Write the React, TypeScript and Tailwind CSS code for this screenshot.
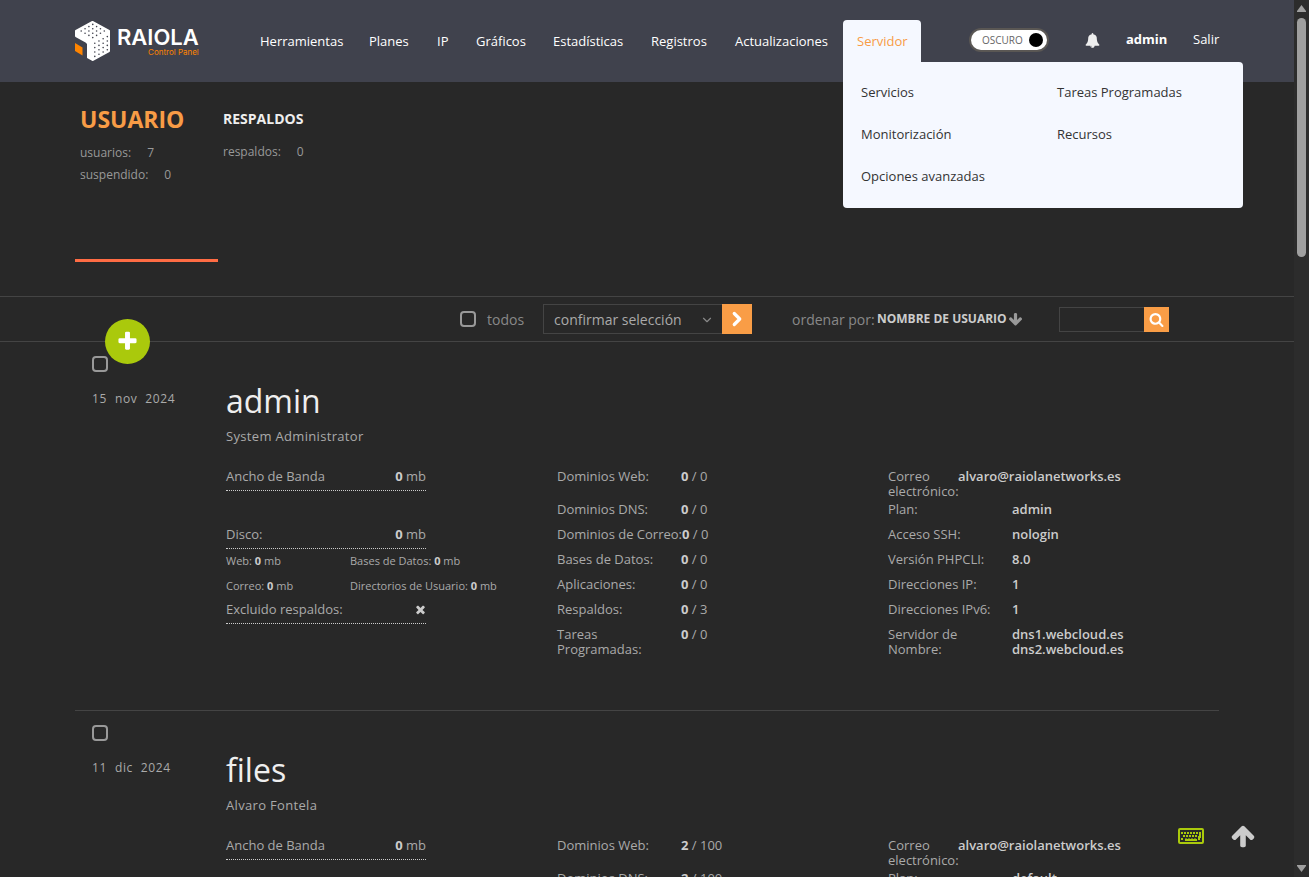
import { ChevronDown, ChevronRight } from "lucide-react"

type Account = {
  id: string
  date: string[]
  owner: string
  bandwidth: string
  disk: string
  limits: { label: string; used: string; max: string }[]
  email: string
  info: { label: string; value: string[] }[]
}

const navItems = [
  { label: "Herramientas", width: "w-[109px]" },
  { label: "Planes", width: "w-[68px]" },
  { label: "IP", width: "w-[39px]" },
  { label: "Gráficos", width: "w-[77px]" },
  { label: "Estadísticas", width: "w-[98px]" },
  { label: "Registros", width: "w-[84px]" },
  { label: "Actualizaciones", width: "w-[122px]" },
]

const serverMenu = ["Servicios", "Tareas Programadas", "Monitorización", "Recursos", "Opciones avanzadas"]

const accounts: Account[] = [
  {
    id: "admin",
    date: ["15", "nov", "2024"],
    owner: "System Administrator",
    bandwidth: "0",
    disk: "0",
    limits: [
      { label: "Dominios Web:", used: "0", max: "0" },
      { label: "Dominios DNS:", used: "0", max: "0" },
      { label: "Dominios de Correo:", used: "0", max: "0" },
      { label: "Bases de Datos:", used: "0", max: "0" },
      { label: "Aplicaciones:", used: "0", max: "0" },
      { label: "Respaldos:", used: "0", max: "3" },
      { label: "Tareas\nProgramadas:", used: "0", max: "0" },
    ],
    email: "alvaro@raiolanetworks.es",
    info: [
      { label: "Plan:", value: ["admin"] },
      { label: "Acceso SSH:", value: ["nologin"] },
      { label: "Versión PHPCLI:", value: ["8.0"] },
      { label: "Direcciones IP:", value: ["1"] },
      { label: "Direcciones IPv6:", value: ["1"] },
      { label: "Servidor de Nombre:", value: ["dns1.webcloud.es", "dns2.webcloud.es"] },
    ],
  },
  {
    id: "files",
    date: ["11", "dic", "2024"],
    owner: "Alvaro Fontela",
    bandwidth: "0",
    disk: "0",
    limits: [
      { label: "Dominios Web:", used: "2", max: "100" },
      { label: "Dominios DNS:", used: "2", max: "100" },
    ],
    email: "alvaro@raiolanetworks.es",
    info: [{ label: "Plan:", value: ["default"] }],
  },
]

const icons = {
  arrowUp:
    "M1675 971q0 51-37 90l-75 75q-38 38-91 38-54 0-90-38l-294-293v704q0 52-37.500 84.500t-90.500 32.500h-128q-53 0-90.500-32.500t-37.500-84.500v-704l-294 293q-36 38-90 38t-90-38l-75-75q-38-38-38-90 0-53 38-91l651-651q35-37 90-37 54 0 91 37l651 651q37 39 37 91z",
  arrowDown:
    "M1675 832q0 53-37 90l-651 652q-39 37-91 37-53 0-90-37l-651-652q-38-36-38-90 0-53 38-91l74-75q39-37 91-37 53 0 90 37l294 294v-704q0-52 38-90t90-38h128q52 0 90 38t38 90v704l294-294q37-37 90-37 52 0 91 37l75 75q37 39 37 91z",
  bell: "M912 1696q0-16-16-16-59 0-101.500-42.500t-42.500-101.500q0-16-16-16t-16 16q0 73 51.500 124.500t124.500 51.500q16 0 16-16zm816-288q0 52-38 90t-90 38h-448q0 106-75 181t-181 75-181-75-75-181h-448q-52 0-90-38t-38-90q50-42 91-88t85-119.500 74.500-158.500 50-206 19.500-260q0-152 117-282.500t307-158.500q-8-19-8-39 0-40 28-68t68-28 68 28 28 68q0 20-8 39 190 28 307 158.500t117 282.500q0 139 19.500 260t50 206 74.500 158.500 85 119.500 91 88z",
  times:
    "M1490 1322q0 40-28 68l-136 136q-28 28-68 28t-68-28l-294-294-294 294q-28 28-68 28t-68-28l-136-136q-28-28-28-68t28-68l294-294-294-294q-28-28-28-68t28-68l136-136q28-28 68-28t68 28l294 294 294-294q28-28 68-28t68 28l136 136q28 28 28 68t-28 68l-294 294 294 294q28 28 28 68z",
  plus: "M1600 736v192q0 40-28 68t-68 28h-416v416q0 40-28 68t-68 28h-192q-40 0-68-28t-28-68v-416h-416q-40 0-68-28t-28-68v-192q0-40 28-68t68-28h416v-416q0-40 28-68t68-28h192q40 0 68 28t28 68v416h416q40 0 68 28t28 68z",
  search:
    "M1216 832q0-185-131.500-316.500t-316.500-131.500-316.500 131.500-131.500 316.500 131.500 316.500 316.500 131.500 316.500-131.500 131.500-316.500zm512 832q0 52-38 90t-90 38q-54 0-90-38l-343-342q-179 124-399 124-143 0-273.500-55.500t-225-150-150-225-55.500-273.500 55.500-273.500 150-225 225-150 273.500-55.500 273.500 55.500 225 150 150 225 55.500 273.500q0 220-124 399l343 343q37 37 37 90z",
}

const Icon = ({ name, className }: { name: keyof typeof icons; className: string }) => (
  <svg viewBox="0 0 1792 1792" fill="currentColor" aria-hidden="true" className={className}>
    <path d={icons[name]} />
  </svg>
)

const steps = [0.12, 0.34, 0.56, 0.78]

const Logo = () => (
  <a href="#inicio" aria-label="Raiola Control Panel" className="flex h-[42px] w-[171px] items-center">
    <svg viewBox="0 0 36 40" className="h-10 w-9">
      <path d="M17.500 1 34 10V30L17.500 39 13 36.500V22.500L11 20.500 1 15V10Z" fill="#fff" stroke="#fff" strokeWidth="2" strokeLinejoin="round" />
      <g fill="#40424d">
        {/* top face */}
        {steps.map((u) =>
          steps.map((v) => (
            <circle key={`${u}-${v}`} cx={2 + (u + v) * 17.5} cy={10 + (v - u) * 10} r="0.8" />
          ))
        )}
        {/* right face */}
        {steps.map((u) =>
          steps.map((v) => (
            <circle key={`${u}-${v}`} cx={17.5 + u * 19} cy={21 - u * 10 + v * 20} r="0.8" />
          ))
        )}
      </g>
      <path d="M0 22 7.500 26.500V34.500L0 30Z" fill="#ff8400" />
    </svg>
    <span className="ml-[6px] flex flex-col items-end font-['Inter']">
      <span className="text-[22px] leading-[22px] font-semibold text-white">RAIOLA</span>
      <span className="text-[8px] leading-[8px] text-[#ff8400]">Control Panel</span>
    </span>
  </a>
)

const Header = () => (
  <header className="relative z-10 flex h-[82px] items-start bg-[#40424d] px-[75px] pt-5 text-[13px] text-white">
    <Logo />
    <nav className="flex">
      {navItems.map((item) => (
        <a key={item.label} href="#" className={`${item.width} h-[42px] pl-[14px] leading-[42px] whitespace-nowrap`}>
          {item.label}
        </a>
      ))}
      <div className="relative">
        <a href="#servidor" className="block h-[42px] w-[78px] rounded-t-[4px] bg-[#f5f8ff] pl-[14px] leading-[42px] text-[#f89c46]">
          Servidor
        </a>
        <ul className="absolute top-[42px] left-0 grid w-[400px] grid-cols-[196px_1fr] rounded-[4px] rounded-tl-none bg-[#f5f8ff] px-[18px] pt-[9px] pb-[11px] text-[#333]">
          {serverMenu.map((label) => (
            <li key={label}>
              <a href="#" className="block h-[42px] leading-[42px]">{label}</a>
            </li>
          ))}
        </ul>
      </div>
    </nav>
    <div className="ml-auto flex h-10 items-center">
      <button className="flex h-5 w-[76px] items-center justify-between rounded-full bg-white pr-[4px] pl-[11px] text-[10px] text-[#666] ring-2 ring-[#5a5754]">
        OSCURO
        <span className="size-[14px] rounded-full bg-black" />
      </button>
      <button aria-label="Notificaciones" className="ml-[38px]">
        <Icon name="bell" className="size-[15px] text-[#eee]" />
      </button>
      <a href="#cuenta" className="ml-[26px] w-[67px] font-bold">admin</a>
      <a href="#salir" className="w-[26px] whitespace-nowrap">Salir</a>
    </div>
  </header>
)

const Stats = () => (
  <section className="flex h-[214px] px-[75px] text-[12px] text-[#999]">
    <div className="h-[180px] w-[143px] border-b-3 border-[#ff6c44] px-[5px] pt-[22px]">
      <a href="#usuario" className="block text-[23px] leading-[30px] font-bold text-[#f89c46]">USUARIO</a>
      <dl className="mt-2 leading-[22px]">
        <div className="flex gap-4"><dt>usuarios:</dt><dd>7</dd></div>
        <div className="flex gap-4"><dt>suspendido:</dt><dd>0</dd></div>
      </dl>
    </div>
    <div className="px-[5px] pt-[22px]">
      <a href="#respaldos" className="block text-[14px] leading-[30px] font-bold text-[#eee]">RESPALDOS</a>
      <dl className="mt-[7px] leading-[22px]">
        <div className="flex gap-4"><dt>respaldos:</dt><dd>0</dd></div>
      </dl>
    </div>
  </section>
)

const Checkbox = ({ label }: { label: string }) => (
  <input
    type="checkbox"
    aria-label={label}
    className="block size-4 appearance-none rounded-[4px] border-2 border-[#999] checked:bg-[#999]"
  />
)

const Toolbar = () => (
  <section className="relative flex h-[46px] items-center justify-end border-y border-[#444] pr-[125px] text-[14px] text-[#888]">
    <button
      aria-label="Añadir usuario"
      className="absolute top-[22px] left-[105px] flex size-[45px] items-center justify-center rounded-full bg-[#aac90c] text-white"
    >
      <Icon name="plus" className="size-[23px]" />
    </button>
    <label className="flex w-[83px] items-center gap-[11px]">
      <Checkbox label="todos" />
      todos
    </label>
    <div className="relative">
      <select aria-label="confirmar selección" className="block h-[30px] w-[179px] appearance-none border border-r-0 border-[#444] bg-[#282828] pl-[10px] text-[#aaa]">
        <option>confirmar selección</option>
      </select>
      <ChevronDown className="pointer-events-none absolute top-[9px] right-2 size-[14px]" strokeWidth={2} />
    </div>
    <button aria-label="Aplicar" className="flex size-[30px] items-center justify-center bg-[#f99d46] text-white">
      <ChevronRight className="size-[22px]" strokeWidth={3.5} />
    </button>
    <div className="ml-10 flex w-[267px] items-center">
      <span className="w-[85px] whitespace-nowrap">ordenar por:</span>
      <button className="flex items-center gap-px text-[12px] font-bold whitespace-nowrap text-[#ccc]">
        NOMBRE DE USUARIO
        <Icon name="arrowDown" className="size-[15px] text-[#999]" />
      </button>
    </div>
    <form className="flex">
      <input type="text" aria-label="Buscar" className="h-[25px] w-[85px] border border-r-0 border-[#444] bg-transparent px-1" />
      <button type="button" aria-label="Buscar" className="flex size-[25px] items-center justify-center bg-[#f99d46] text-white">
        <Icon name="search" className="size-[15px]" />
      </button>
    </form>
  </section>
)

const Amount = ({ value }: { value: string }) => (
  <span><b className="text-[#ccc]">{value}</b> mb</span>
)

const AccountRow = ({ account }: { account: Account }) => (
  <article className="flex border-b border-[#444] text-[13px] leading-[15px] text-[#aaa]">
    <div className="w-[151px] shrink-0 pt-[14px] pl-[17px]">
      <Checkbox label={account.id} />
      <p className="mt-[19px] flex gap-2 text-[12px] leading-4 tracking-wider">
        {account.date.map((part) => <span key={part}>{part}</span>)}
      </p>
    </div>
    <div className="flex-1 pt-[39px] pb-[53px]">
      <h2 className="text-[32px] leading-[40px] text-[#eee]">{account.id}</h2>
      <p className="mt-[7px] leading-4 tracking-wide">{account.owner}</p>
      <div className="mt-[25px] grid grid-cols-3">
        <div>
          <p className="flex w-[200px] justify-between border-b border-dotted border-[#ccc] pb-[6px]">
            Ancho de Banda <Amount value={account.bandwidth} />
          </p>
          <p className="mt-9 flex w-[200px] justify-between border-b border-dotted border-[#ccc] pb-[6px]">
            Disco: <Amount value={account.disk} />
          </p>
          <div className="mt-1 grid grid-cols-[124px_1fr] gap-y-[10px] text-[11px]">
            <span>Web: <Amount value="0" /></span>
            <span>Bases de Datos: <Amount value="0" /></span>
            <span>Correo: <Amount value="0" /></span>
            <span>Directorios de Usuario: <Amount value="0" /></span>
          </div>
          <p className="mt-[9px] flex w-[200px] items-center justify-between border-b border-dotted border-[#ccc] pb-[6px]">
            Excluido respaldos: <Icon name="times" className="-mr-px size-[13px] text-[#ccc]" />
          </p>
        </div>
        <dl>
          {account.limits.map((limit) => (
            <div key={limit.label} className="flex pb-[10px] first:h-[33px] last:pb-0">
              <dt className="min-w-[124px] whitespace-pre">{limit.label}</dt>
              <dd><b className="text-[#ccc]">{limit.used}</b> / {limit.max}</dd>
            </div>
          ))}
        </dl>
        <dl>
          <div className="flex h-[33px]">
            <dt className="w-[70px] shrink-0">Correo electrónico:</dt>
            <dd className="font-semibold text-[#ccc]">{account.email}</dd>
          </div>
          {account.info.map((row) => (
            <div key={row.label} className="flex pb-[10px] last:pb-0">
              <dt className="w-[124px] shrink-0 pr-5">{row.label}</dt>
              <dd className="font-semibold text-[#ccc]">
                {row.value.map((line) => <p key={line}>{line}</p>)}
              </dd>
            </div>
          ))}
        </dl>
      </div>
    </div>
  </article>
)

const KeyboardIcon = () => (
  <svg viewBox="0 0 26 16" className="h-4 w-[26px]" fill="none" stroke="#aac90c">
    <rect x="1" y="1" width="24" height="14" rx="1" strokeWidth="2" />
    <path d="M3 5h18M5 8h15M3 11h3M7 11.500h12M20 11h3" strokeWidth="2" strokeDasharray="2 1" />
    <path d="M22 4v5h-2M7 12h12" strokeWidth="2" />
  </svg>
)

const ScrollBar = () => (
  <div aria-hidden="true" className="flex w-[15px] shrink-0 flex-col items-center bg-[#2c2c2c] py-[5px]">
    <svg viewBox="0 0 9 7" className="h-[7px] w-[9px]" fill="#9f9f9f"><path d="M4.500 0 9 6v1H0V6Z" /></svg>
    <div className="mt-[6px] h-[239px] w-[9px] rounded-full bg-[#9f9f9f]" />
    <svg viewBox="0 0 9 7" className="mt-auto h-[7px] w-[9px]" fill="#9f9f9f"><path d="M4.500 7 0 1V0h9v1Z" /></svg>
  </div>
)

export default function App() {
  return (
    <div className="flex h-screen bg-[#282828] font-['Open_Sans',sans-serif]">
      <div className="min-w-0 flex-1 overflow-y-auto [scrollbar-width:none]">
        <Header />
        <Stats />
        <Toolbar />
        <main className="px-[75px]">
          {accounts.map((account) => (
            <AccountRow key={account.id} account={account} />
          ))}
        </main>
      </div>
      <div className="fixed right-[53px] bottom-[28px] flex items-center gap-[26px]">
        <button aria-label="Atajos de teclado"><KeyboardIcon /></button>
        <button aria-label="Subir"><Icon name="arrowUp" className="size-[26px] text-[#ccc]" /></button>
      </div>
      <ScrollBar />
    </div>
  )
}
